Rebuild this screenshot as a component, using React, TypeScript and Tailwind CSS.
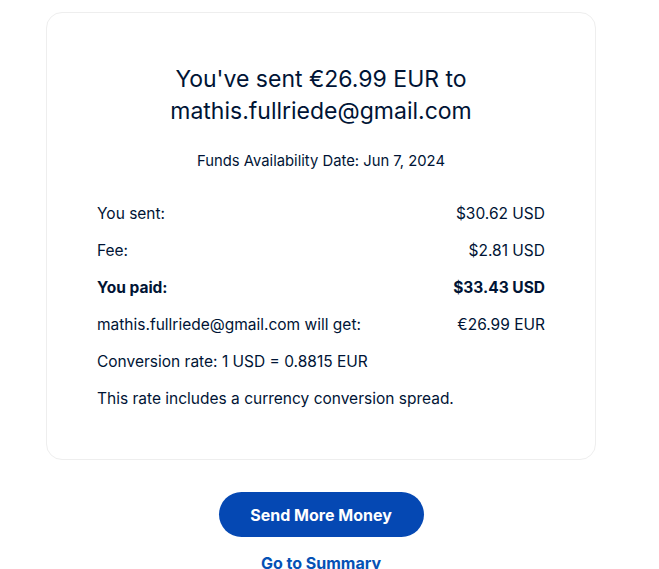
export default function App() {
  const rows: { label: string; value?: string; bold?: boolean }[] = [
    { label: "You sent:", value: "$30.62 USD" },
    { label: "Fee:", value: "$2.81 USD" },
    { label: "You paid:", value: "$33.43 USD", bold: true },
    { label: "mathis.fullriede@gmail.com will get:", value: "€26.99 EUR" },
    { label: "Conversion rate: 1 USD = 0.8815 EUR" },
    { label: "This rate includes a currency conversion spread." },
  ];

  return (
    <div
      className="min-h-screen bg-white text-[#001435]"
      style={{ fontFamily: "Inter, 'Noto Sans', sans-serif" }}
    >
      <div className="pt-[12px] px-[46px] w-[642px]">
        <div className="rounded-2xl border border-[#eeeeee] px-[50px] pt-[50px] pb-[50px]">
          <h1 className="text-center text-[23px] leading-[32px] font-normal">
            You've sent €26.99 EUR to
            <br />
            mathis.fullriede@gmail.com
          </h1>
          <p className="mt-6 text-center text-[14.8px] leading-5">
            Funds Availability Date: Jun 7, 2024
          </p>
          <div className="mt-8 flex flex-col gap-4">
            {rows.map((r) => (
              <div
                key={r.label}
                className={`flex justify-between text-[15.5px] leading-[21px] ${
                  r.bold ? "font-bold" : ""
                }`}
              >
                <span>{r.label}</span>
                {r.value && <span>{r.value}</span>}
              </div>
            ))}
          </div>
        </div>
        <div className="mt-[32px] flex flex-col items-center">
          <button
            type="button"
            className="h-[45px] w-[205px] rounded-full bg-[#0548b3] text-[16px] font-bold text-white"
          >
            Send More Money
          </button>
          <a href="#" className="mt-4 text-[16px] leading-5 font-bold text-[#0551b5]">
            Go to Summary
          </a>
        </div>
      </div>
    </div>
  );
}
